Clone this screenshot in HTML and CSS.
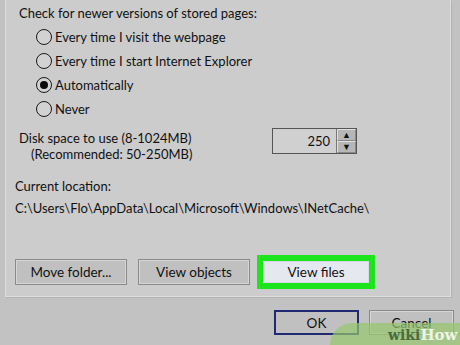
FILE: index.html
```html
<!DOCTYPE html>
<html lang="en">
<head>
    <meta charset="UTF-8">
    <title>Temporary Internet Files</title>
    <link rel="stylesheet" href="styles.css">
</head>
<body>
    <div class="screen">
        <div class="group">
            <div class="heading">Check for newer versions of stored pages:</div>
            <div class="options">
                <div class="option"><span class="radio"></span>Every time I visit the webpage</div>
                <div class="option"><span class="radio"></span>Every time I start Internet Explorer</div>
                <div class="option"><span class="radio checked"></span>Automatically</div>
                <div class="option"><span class="radio"></span>Never</div>
            </div>

            <div class="disk">
                <div class="disk-label">
                    <div>Disk space to use (8-1024MB)</div>
                    <div class="indent">(Recommended: 50-250MB)</div>
                </div>
                <div class="spin">
                    <div class="spin-value">250</div>
                    <div class="spin-buttons">
                        <div class="spin-btn">&#9650;</div>
                        <div class="spin-btn">&#9660;</div>
                    </div>
                </div>
            </div>

            <div class="location">
                <div>Current location:</div>
                <div class="path">C:\Users\Flo\AppData\Local\Microsoft\Windows\INetCache\</div>
            </div>

            <div class="actions">
                <button class="btn move">Move folder...</button>
                <button class="btn objects">View objects</button>
                <div class="highlight">
                    <button class="btn files">View files</button>
                </div>
            </div>
        </div>

        <div class="footer">
            <button class="btn ok">OK</button>
            <button class="btn cancel">Cancel</button>
        </div>

        <!-- watermark -->
        <div class="watermark">wiki<b>How</b></div>
    </div>
</body>
</html>
```

FILE: styles.css
```css
body {
    margin: 0;
    background-color: #c2c2c2;
    font-family: 'Lato', sans-serif;
    font-size: 13px;
    color: #111;
}

.screen {
    width: 460px;
    height: 345px;
    overflow: hidden;
    position: relative;
}

/* Group box */
.group {
    margin-left: 5px;
    width: 446px;
    height: 297px;
    background-color: #cccccc;
    border: 1px solid #dedede;
    border-top: none;
    box-shadow: 1px 1px 0 #b3b3b3;
    padding-left: 13px;
    box-sizing: border-box;
}

.heading {
    padding-top: 3px;
    line-height: 20px;
}

.options {
    margin-left: 17px;
    margin-top: 2px;
}

.option {
    display: flex;
    align-items: center;
    height: 24px;
}

.radio {
    width: 14px;
    height: 14px;
    border: 1px solid #1a1a1a;
    border-radius: 50%;
    background-color: #d2d2d2;
    margin-right: 3px;
    position: relative;
}

.radio.checked::after {
    content: "";
    position: absolute;
    left: 3px;
    top: 3px;
    width: 8px;
    height: 8px;
    border-radius: 50%;
    background-color: #0a0a0a;
}

/* Disk space */
.disk {
    display: flex;
    align-items: flex-start;
    margin-top: 9px;
}

.disk-label {
    line-height: 16px;
    width: 253px;
}

.indent {
    padding-left: 12px;
}

.spin {
    display: flex;
    height: 24px;
    border: 1px solid #555;
    margin-top: -2px;
}

.spin-value {
    width: 57px;
    background-color: #d0d0d0;
    text-align: right;
    padding-right: 6px;
    line-height: 24px;
}

.spin-buttons {
    width: 19px;
    display: flex;
    flex-direction: column;
    border-left: 1px solid #777;
}

.spin-btn {
    flex: 1;
    font-size: 9px;
    text-align: center;
    line-height: 10px;
    color: #111;
    background-color: #b6b6b6;
    border: 1px solid #e2e2e2;
    border-right-color: #888;
    border-bottom-color: #888;
}

/* Location */
.location {
    margin-left: -4px;
    margin-top: 13px;
    line-height: 22px;
}

/* Buttons */
.btn {
    font-family: 'Lato', sans-serif;
    font-size: 13.5px;
    color: #111;
    background-color: #c0c0c0;
    border: 1px solid #8a8a8a;
    box-shadow: inset 0 0 0 1px #d6d6d6;
    height: 26px;
    padding: 0;
}

.actions {
    display: flex;
    align-items: center;
    margin-left: -4px;
    margin-top: 36px;
}

.move {
    width: 112px;
}

.objects {
    width: 112px;
    margin-left: 11px;
}

.highlight {
    margin-left: 7px;
    border: 6px solid #1ee41e;
}

.files {
    width: 106px;
    height: 22px;
    background-color: #e6e8f0;
    border-color: #d7d9e4;
    box-shadow: none;
}

.footer {
    display: flex;
    margin-top: 13px;
    margin-left: 274px;
}

.ok {
    width: 85px;
    height: 25px;
    border: 2px solid #1f2a72;
    box-shadow: none;
}

.cancel {
    width: 85px;
    height: 25px;
    margin-left: 10px;
}

/* wikiHow mark over the corner */
.watermark {
    position: absolute;
    right: 0;
    bottom: 0;
    width: 130px;
    height: 22px;
    border-radius: 50px 0 0 0;
    background-color: rgba(150, 200, 110, 0.7);
    font-family: 'DejaVu Serif', serif;
    font-weight: bold;
    font-size: 14px;
    color: #4c6a3d;
    padding: 3px 0 0 58px;
    box-sizing: border-box;
    white-space: nowrap;
}

.watermark b {
    color: #eef5e6;
    font-size: 15px;
}
```
